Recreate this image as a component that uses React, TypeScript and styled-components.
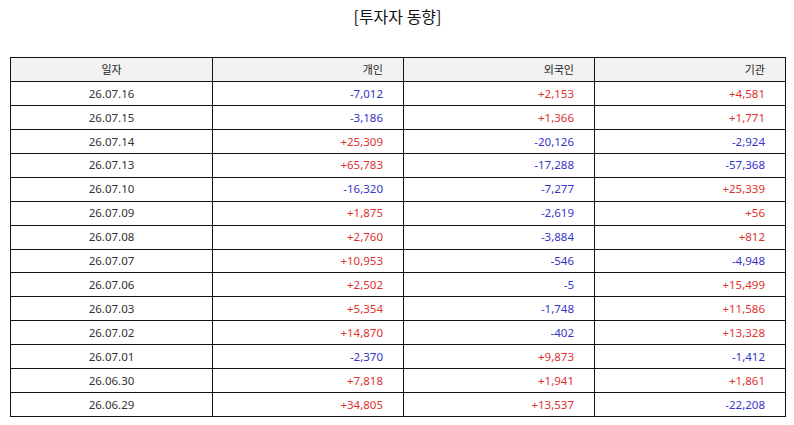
import React from 'react';
import styled, { createGlobalStyle } from 'styled-components';

interface FlowRow {
  date: string;
  individual: string;
  foreign: string;
  institution: string;
}

const rows: FlowRow[] = [
  { date: '26.07.16', individual: '-7,012', foreign: '+2,153', institution: '+4,581' },
  { date: '26.07.15', individual: '-3,186', foreign: '+1,366', institution: '+1,771' },
  { date: '26.07.14', individual: '+25,309', foreign: '-20,126', institution: '-2,924' },
  { date: '26.07.13', individual: '+65,783', foreign: '-17,288', institution: '-57,368' },
  { date: '26.07.10', individual: '-16,320', foreign: '-7,277', institution: '+25,339' },
  { date: '26.07.09', individual: '+1,875', foreign: '-2,619', institution: '+56' },
  { date: '26.07.08', individual: '+2,760', foreign: '-3,884', institution: '+812' },
  { date: '26.07.07', individual: '+10,953', foreign: '-546', institution: '-4,948' },
  { date: '26.07.06', individual: '+2,502', foreign: '-5', institution: '+15,499' },
  { date: '26.07.03', individual: '+5,354', foreign: '-1,748', institution: '+11,586' },
  { date: '26.07.02', individual: '+14,870', foreign: '-402', institution: '+13,328' },
  { date: '26.07.01', individual: '-2,370', foreign: '+9,873', institution: '-1,412' },
  { date: '26.06.30', individual: '+7,818', foreign: '+1,941', institution: '+1,861' },
  { date: '26.06.29', individual: '+34,805', foreign: '+13,537', institution: '-22,208' },
];

const GlobalStyle = createGlobalStyle`
  body {
    margin: 0;
    background: #fff;
    font-family: "Noto Sans", "Noto Sans CJK KR", sans-serif;
    color: #222;
  }
`;

const App: React.FC = () => {
  return (
    <>
      <GlobalStyle />
      <Page>
        <Title>[투자자 동향]</Title>
        <Table>
          <colgroup>
            <col style={{ width: 202 }} />
            <col style={{ width: 191 }} />
            <col style={{ width: 191 }} />
            <col style={{ width: 191 }} />
          </colgroup>
          <thead>
            <tr>
              <HeadCell $align="center">일자</HeadCell>
              <HeadCell $align="right">개인</HeadCell>
              <HeadCell $align="right">외국인</HeadCell>
              <HeadCell $align="right">기관</HeadCell>
            </tr>
          </thead>
          <tbody>
            {rows.map((row) => (
              <tr key={row.date}>
                <DateCell>{row.date}</DateCell>
                <ValueCell $up={row.individual.startsWith('+')}>{row.individual}</ValueCell>
                <ValueCell $up={row.foreign.startsWith('+')}>{row.foreign}</ValueCell>
                <ValueCell $up={row.institution.startsWith('+')}>{row.institution}</ValueCell>
              </tr>
            ))}
          </tbody>
        </Table>
      </Page>
    </>
  );
};

const Page = styled.div`
  padding: 2px 9px 0 10px;
`;

const Title = styled.h1`
  margin: 0;
  height: 55px;
  font-family: "Noto Sans CJK KR", sans-serif;
  font-size: 16px;
  font-weight: 400;
  line-height: 28px;
  text-align: center;
  color: #111;
`;

const Table = styled.table`
  width: 775px;
  border-collapse: collapse;
  table-layout: fixed;
  font-size: 11.5px;
`;

const Cell = styled.td`
  height: 22.95px;
  padding: 0 20px 0 8px;
  border: 1px solid #111;
  line-height: 1;
  white-space: nowrap;
`;

const HeadCell = styled(Cell).attrs({ as: 'th' })<{ $align: 'center' | 'right' }>`
  background: #f2f2f2;
  font-family: "Noto Sans CJK KR", sans-serif;
  font-size: 11px;
  font-weight: 400;
  color: #222;
  text-align: ${({ $align }) => $align};
  padding: ${({ $align }) => ($align === 'center' ? '0' : '0 20px 0 8px')};
`;

const DateCell = styled(Cell)`
  text-align: center;
  padding: 0;
  color: #333;
`;

const ValueCell = styled(Cell)<{ $up: boolean }>`
  text-align: right;
  color: ${({ $up }) => ($up ? '#e03131' : '#3535c8')};
`;

export default App;
